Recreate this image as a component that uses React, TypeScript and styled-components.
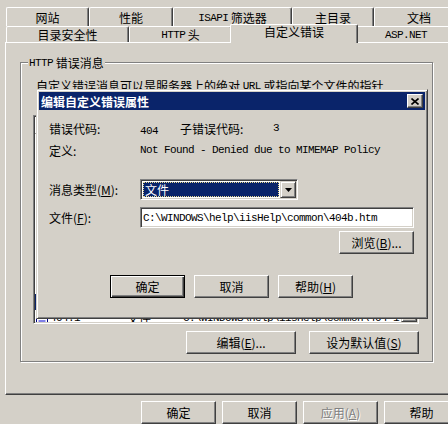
import React from "react";
import styled, { createGlobalStyle, css } from "styled-components";

const FACE = "#d4d0c8";
const SHADOW = "#808080";
const DARK = "#404040";
const NAVY = "#0a246a";

const GlobalStyle = createGlobalStyle`
  html, body { margin: 0; padding: 0; background: ${FACE}; }
  body {
    font-family: "Noto Sans CJK SC", "Noto Sans", sans-serif;
    font-size: 12px;
    color: #000;
  }
  #root { width: 448px; height: 424px; overflow: hidden; }
  * { box-sizing: border-box; }
`;

const Window = styled.div`
  position: relative;
  width: 462px;
  height: 424px;
  padding-top: 7px;
  background: ${FACE};
`;

const TabRow = styled.div<{ $h: number }>`
  display: flex;
  margin-left: 6px;
  height: ${(p) => p.$h}px;
`;

const Tab = styled.div<{ $w: number; $active?: boolean }>`
  flex: none;
  width: ${(p) => p.$w}px;
  height: 100%;
  display: flex;
  align-items: center;
  justify-content: center;
  padding-top: 1px;
  background: ${FACE};
  border-top: 1px solid #fff;
  border-left: 1px solid #fff;
  border-right: 1px solid ${DARK};
  box-shadow: inset -1px 0 0 ${SHADOW};
  border-radius: 2px 2px 0 0;
  line-height: 12px;
  white-space: nowrap;
  ${(p) =>
    p.$active &&
    css`
      position: relative;
      z-index: 2;
      width: ${p.$w + 4}px;
      height: 19px;
      margin: -2px -2px 0;
      padding: 0 0 4px;
    `}
`;

const Panel = styled.div`
  margin-left: 5px;
  width: 452px;
  height: 353px;
  border: 1px solid;
  border-color: #fff ${DARK} ${DARK} #fff;
  box-shadow: inset -1px -1px 0 ${SHADOW};
  padding: 19px 0 0 14px;
`;

const Group = styled.div`
  width: 413px;
  height: 300px;
  border: 1px solid ${SHADOW};
  box-shadow: inset 1px 1px 0 #fff, 1px 1px 0 #fff;
  padding: 0 13px 0 12px;
`;

const Legend = styled.div`
  display: flex;
  align-items: center;
  width: max-content;
  height: 13px;
  margin: -7px 0 0 -5px;
  padding: 0 1px;
  background: ${FACE};
  line-height: 13px;
  white-space: nowrap;
`;

const Desc = styled.div`
  display: flex;
  align-items: center;
  height: 14px;
  margin: 10px 0 0 3px;
  line-height: 14px;
  white-space: nowrap;
`;

const ListView = styled.div`
  margin-top: 22px;
  height: 209px;
  display: flex;
  background: #fff;
  border: 1px solid;
  border-color: ${SHADOW} #fff #fff ${SHADOW};
  box-shadow: inset 1px 1px 0 ${DARK}, inset -1px -1px 0 ${FACE};
  padding: 1px;
  overflow: hidden;
`;

const ListBody = styled.div`
  flex: 1;
  min-width: 0;
  overflow: hidden;
`;

const ListHeader = styled.div`
  display: flex;
  height: 17px;
`;

const HeaderCell = styled.div<{ $w?: number }>`
  flex: ${(p) => (p.$w ? "none" : "1")};
  width: ${(p) => (p.$w ? `${p.$w}px` : "auto")};
  height: 17px;
  display: flex;
  align-items: center;
  background: ${FACE};
  border: 1px solid;
  border-color: #fff ${DARK} ${DARK} #fff;
  box-shadow: inset -1px -1px 0 ${SHADOW};
  padding-left: 5px;
  white-space: nowrap;
`;

const ListItem = styled.div<{ $sel?: boolean }>`
  display: flex;
  align-items: center;
  height: 16px;
  white-space: nowrap;
  background: ${(p) => (p.$sel ? NAVY : "transparent")};
  color: ${(p) => (p.$sel ? "#fff" : "#000")};
`;

const ItemCell = styled.div<{ $w?: number }>`
  flex: ${(p) => (p.$w ? "none" : "1")};
  width: ${(p) => (p.$w ? `${p.$w}px` : "auto")};
  height: 16px;
  display: flex;
  align-items: center;
  gap: 2px;
  padding-left: 1px;
  overflow: hidden;
`;

const ScrollBar = styled.div`
  flex: none;
  width: 16px;
  display: flex;
  flex-direction: column;
  background-color: #ebe9e4;
`;

const ScrollTrack = styled.div`
  flex: 1;
`;

const ScrollArrow = styled.div`
  height: 16px;
  background: ${FACE};
  border: 1px solid;
  border-color: ${FACE} ${DARK} ${DARK} ${FACE};
  box-shadow: inset 1px 1px 0 #fff, inset -1px -1px 0 ${SHADOW};
  display: flex;
  align-items: center;
  justify-content: center;
`;

const ButtonRow = styled.div<{ $gap: number; $mt: number; $end?: boolean; $pl?: number }>`
  display: flex;
  gap: ${(p) => p.$gap}px;
  margin-top: ${(p) => p.$mt}px;
  justify-content: ${(p) => (p.$end ? "flex-end" : "flex-start")};
  padding-left: ${(p) => p.$pl ?? 0}px;
`;

const Btn = styled.button<{ $w: number; $default?: boolean; $disabled?: boolean }>`
  flex: none;
  width: ${(p) => p.$w}px;
  height: 23px;
  margin: 0;
  padding: 0;
  font: inherit;
  color: #000;
  display: flex;
  align-items: center;
  justify-content: center;
  background: ${FACE};
  border: 1px solid;
  border-color: #fff ${DARK} ${DARK} #fff;
  box-shadow: inset -1px -1px 0 ${SHADOW};
  line-height: 12px;
  white-space: nowrap;
  ${(p) =>
    p.$default &&
    css`
      border-color: #000;
      box-shadow: inset 1px 1px 0 #fff, inset -1px -1px 0 ${DARK},
        inset -2px -2px 0 ${SHADOW};
    `}
  ${(p) =>
    p.$disabled &&
    css`
      color: ${SHADOW};
      text-shadow: 1px 1px 0 #fff;
    `}
`;

const U = styled.span`
  text-decoration: underline;
`;

const Mono = styled.span`
  font-family: "Liberation Mono", "DejaVu Sans Mono", monospace;
  font-size: 11px;
  line-height: 10px;
  letter-spacing: -0.6px;
`;

const BottomBar = styled.div`
  display: flex;
  gap: 6px;
  margin-top: 6px;
  padding-left: 141px;
`;

/* ---- modal dialog ---- */

const Dialog = styled.div`
  position: absolute;
  left: 36px;
  top: 89px;
  width: 392px;
  height: 230px;
  z-index: 5;
  background: ${FACE};
  border: 1px solid;
  border-color: ${FACE} ${DARK} ${DARK} ${FACE};
  box-shadow: inset 1px 1px 0 #fff, inset -1px -1px 0 ${SHADOW};
  padding: 2px;
`;

const TitleBar = styled.div`
  height: 18px;
  background: ${NAVY};
  color: #fff;
  font-weight: 700;
  display: flex;
  align-items: center;
  justify-content: space-between;
  padding: 0 2px 0 2px;
  white-space: nowrap;
`;

const CloseBtn = styled.div`
  width: 16px;
  height: 14px;
  background: ${FACE};
  border: 1px solid;
  border-color: #fff ${DARK} ${DARK} #fff;
  box-shadow: inset -1px -1px 0 ${SHADOW};
  display: flex;
  align-items: center;
  justify-content: center;
`;

const DialogBody = styled.div`
  padding: 11px 11px 0 10px;
`;

const InfoRow = styled.div<{ $mt?: number }>`
  display: flex;
  align-items: center;
  height: 14px;
  margin-top: ${(p) => p.$mt ?? 0}px;
  white-space: nowrap;
`;

const FieldRow = styled.div<{ $mt: number }>`
  display: flex;
  align-items: center;
  height: 21px;
  margin-top: ${(p) => p.$mt}px;
  white-space: nowrap;
`;

const Label = styled.span<{ $w: number }>`
  flex: none;
  width: ${(p) => p.$w}px;
`;

const Combo = styled.div`
  width: 158px;
  height: 21px;
  display: flex;
  background: #fff;
  border: 1px solid;
  border-color: ${SHADOW} #fff #fff ${SHADOW};
  box-shadow: inset 1px 1px 0 ${DARK}, inset -1px -1px 0 ${FACE};
  padding: 1px;
`;

const ComboValue = styled.div`
  flex: 1;
  margin: 1px;
  background: ${NAVY};
  color: #fff;
  border: 1px dotted #e8d890;
  padding-left: 1px;
  line-height: 12px;
  display: flex;
  align-items: center;
`;

const DropBtn = styled.div`
  width: 16px;
  height: 17px;
  background: ${FACE};
  border: 1px solid;
  border-color: ${FACE} ${DARK} ${DARK} ${FACE};
  box-shadow: inset 1px 1px 0 #fff, inset -1px -1px 0 ${SHADOW};
  display: flex;
  align-items: center;
  justify-content: center;
`;

const TextBox = styled.div`
  width: 274px;
  height: 21px;
  background: #fff;
  border: 1px solid;
  border-color: ${SHADOW} #fff #fff ${SHADOW};
  box-shadow: inset 1px 1px 0 ${DARK}, inset -1px -1px 0 ${FACE};
  padding: 0 2px;
  display: flex;
  align-items: center;
  white-space: nowrap;
  overflow: hidden;
`;

const DocIcon = () => (
  <svg width="12" height="11" viewBox="0 0 12 11">
    <rect x="0.5" y="0.5" width="11" height="10" fill="#fff" stroke="#00007f" />
    <path d="M2.5 3h7M2.5 5.5h7M2.5 8h7" stroke="#0000d0" />
  </svg>
);

const DownArrow = () => (
  <svg width="7" height="4" viewBox="0 0 7 4">
    <path d="M0 0h7L3.5 4z" fill="#000" />
  </svg>
);

const CloseGlyph = () => (
  <svg width="8" height="7" viewBox="0 0 8 7">
    <path d="M0.5 0.5L7.5 6.5M7.5 0.5L0.5 6.5" stroke="#000" strokeWidth="1.6" />
  </svg>
);

const PATH = "C:\\WINDOWS\\help\\iisHelp\\common\\";

const rows: [string, string][] = [
  ["400", "400.htm"],
  ["401;1", "401-1.htm"],
  ["401;2", "401-2.htm"],
  ["401;3", "401-3.htm"],
  ["401;4", "401-4.htm"],
  ["401;5", "401-5.htm"],
  ["401;7", "401-1.htm"],
  ["403;1", "403-1.htm"],
  ["403;2", "403-2.htm"],
  ["404;2", "404b.htm"],
  ["404;3", "404b.htm"],
  ["404.1", "404-1.htm"],
];

export default function App() {
  return (
    <>
      <GlobalStyle />
      <Window>
        <TabRow $h={19}>
          <Tab $w={83}>网站</Tab>
          <Tab $w={84}>性能</Tab>
          <Tab $w={119}>
            <Mono>ISAPI</Mono>&nbsp;筛选器
          </Tab>
          <Tab $w={82}>主目录</Tab>
          <Tab $w={90}>文档</Tab>
        </TabRow>
        <TabRow $h={16}>
          <Tab $w={123}>目录安全性</Tab>
          <Tab $w={103}>
            <Mono>HTTP</Mono>&nbsp;头
          </Tab>
          <Tab $w={124} $active>
            自定义错误
          </Tab>
          <Tab $w={100}>
            <Mono>ASP.NET</Mono>
          </Tab>
        </TabRow>
        <Panel>
          <Group>
            <Legend>
              <Mono>HTTP</Mono>&nbsp;错误消息
            </Legend>
            <Desc>
              自定义错误消息可以是服务器上的绝对&nbsp;<Mono>URL</Mono>&nbsp;或指向某个文件的指针
            </Desc>
            <ListView>
              <ListBody>
                <ListHeader>
                  <HeaderCell $w={91}>
                    <Mono>HTTP</Mono>&nbsp;错误
                  </HeaderCell>
                  <HeaderCell $w={56}>输出类型</HeaderCell>
                  <HeaderCell>内容</HeaderCell>
                </ListHeader>
                {rows.map(([code, file], i) => (
                  <ListItem key={code} $sel={i === 10}>
                    <ItemCell $w={91}>
                      <DocIcon />
                      <Mono>{code}</Mono>
                    </ItemCell>
                    <ItemCell $w={56}>文件</ItemCell>
                    <ItemCell>
                      <Mono>{PATH + file}</Mono>
                    </ItemCell>
                  </ListItem>
                ))}
              </ListBody>
              <ScrollBar>
                <ScrollTrack />
                <ScrollArrow>
                  <DownArrow />
                </ScrollArrow>
              </ScrollBar>
            </ListView>
            <ButtonRow $gap={13} $mt={7} $end>
              <Btn $w={110}>
                编辑(<U>E</U>)...
              </Btn>
              <Btn $w={110}>
                设为默认值(<U>S</U>)
              </Btn>
            </ButtonRow>
          </Group>
        </Panel>
        <BottomBar>
          <Btn $w={75}>确定</Btn>
          <Btn $w={75}>取消</Btn>
          <Btn $w={75} $disabled>
            应用(<U>A</U>)
          </Btn>
          <Btn $w={75}>帮助</Btn>
        </BottomBar>

        <Dialog>
          <TitleBar>
            <span>编辑自定义错误属性</span>
            <CloseBtn>
              <CloseGlyph />
            </CloseBtn>
          </TitleBar>
          <DialogBody>
            <InfoRow>
              <Label $w={91}>错误代码:</Label>
              <Label $w={40}>
                <Mono>404</Mono>
              </Label>
              <Label $w={93}>子错误代码:</Label>
              <Mono>3</Mono>
            </InfoRow>
            <InfoRow $mt={8}>
              <Label $w={91}>定义:</Label>
              <Mono>Not Found - Denied due to MIMEMAP Policy</Mono>
            </InfoRow>
            <FieldRow $mt={22}>
              <Label $w={91}>
                消息类型(<U>M</U>):
              </Label>
              <Combo>
                <ComboValue>文件</ComboValue>
                <DropBtn>
                  <DownArrow />
                </DropBtn>
              </Combo>
            </FieldRow>
            <FieldRow $mt={7}>
              <Label $w={91}>
                文件(<U>F</U>):
              </Label>
              <TextBox>
                <Mono>{PATH + "404b.htm"}</Mono>
              </TextBox>
            </FieldRow>
            <ButtonRow $gap={0} $mt={3} $end>
              <Btn $w={75}>
                浏览(<U>B</U>)...
              </Btn>
            </ButtonRow>
            <ButtonRow $gap={9} $mt={21} $pl={61}>
              <Btn $w={75} $default>
                确定
              </Btn>
              <Btn $w={75}>取消</Btn>
              <Btn $w={75}>
                帮助(<U>H</U>)
              </Btn>
            </ButtonRow>
          </DialogBody>
        </Dialog>
      </Window>
    </>
  );
}
